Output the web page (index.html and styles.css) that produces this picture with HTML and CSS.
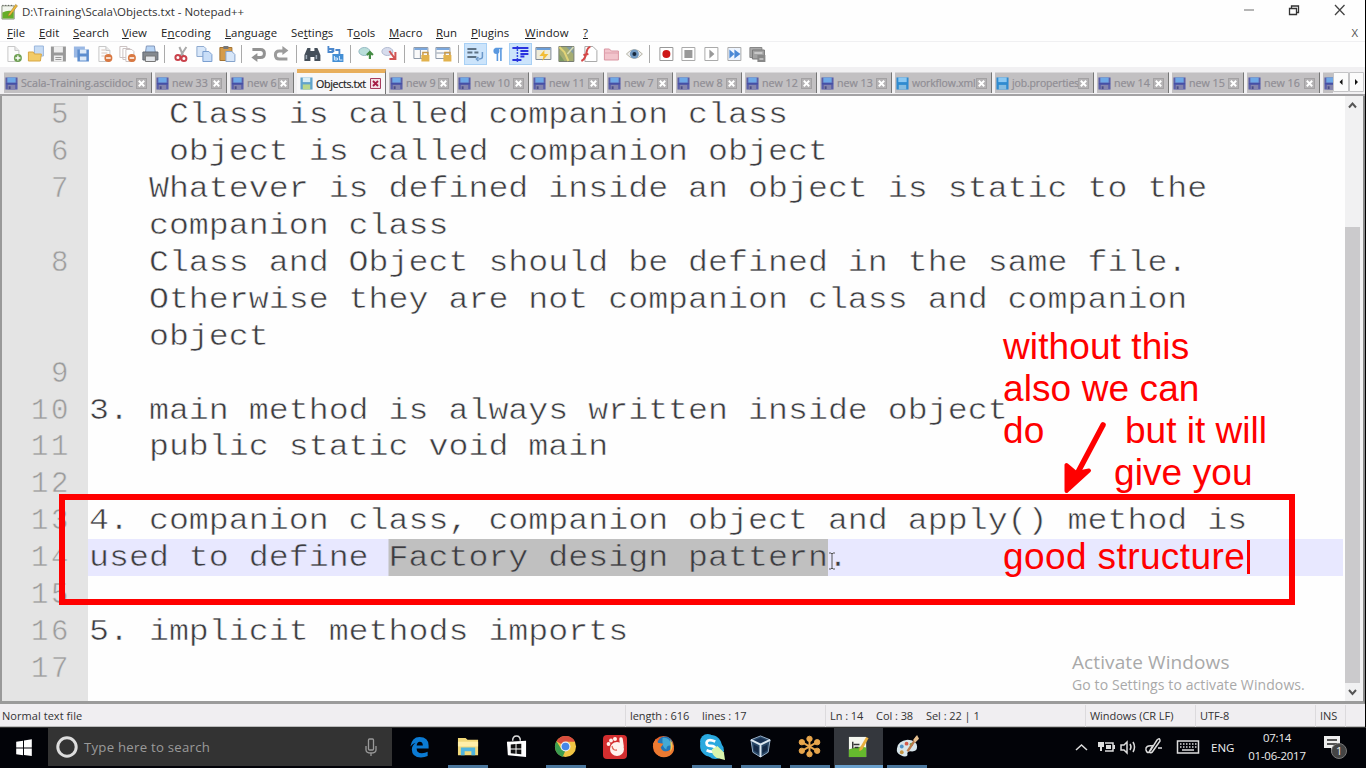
FILE: index.html
```html
<!DOCTYPE html>
<html lang="en">
<head>
<meta charset="utf-8">
<title>D:\Training\Scala\Objects.txt - Notepad++</title>
<link rel="stylesheet" href="styles.css">
</head>
<body>
<svg class="defs" width="0" height="0">
  <symbol id="disk" viewBox="0 0 14 14"><rect x=".5" y=".5" width="13" height="13" fill="#5a5ea8"/><rect x="2.5" y=".5" width="9" height="5.5" fill="#6fa8e6"/><rect x="1" y="6.5" width="12" height="1.5" fill="#4450a8"/><rect x="3" y="8.5" width="8" height="5" fill="#8585ad"/><rect x="4" y="10" width="2" height="3" fill="#4c4d86"/></symbol>
  <symbol id="diskblue" viewBox="0 0 14 14"><rect x=".5" y=".5" width="13" height="13" fill="#2f8bd0"/><rect x="2.5" y=".5" width="9" height="5" fill="#8cc8f2"/><rect x="3" y="8.5" width="8" height="5" fill="#86bce0"/></symbol>
  <symbol id="close" viewBox="0 0 11 11"><rect x=".5" y=".5" width="10" height="10" fill="#b4b2b4" stroke="#a3a1a3"/><path d="M2.8 2.8l5.4 5.4M8.2 2.8L2.8 8.2" stroke="#fff" stroke-width="2"/></symbol>
  <symbol id="page" viewBox="0 0 18 18"><path d="M3.500 1.500h7l4 4v11h-11z" fill="#fcfcfc" stroke="#c8c8c8"/><path d="M10.500 1.500v4h4" fill="#e8e8e8" stroke="#c8c8c8"/></symbol>
  <symbol id="npp" viewBox="0 0 18 18"><path d="M1 3h13v14H1z" fill="#f2f5ee" stroke="#889180"/><path d="M1.500 10q6-3 12-1v7.500h-12z" fill="#65ad28"/><path d="M2 3v-1M5 3v-1M8 3v-1M11 3v-1" stroke="#444"/><path d="M8 12L15.500 1.500l2 1.500L10 13l-2.500 1z" fill="#eeb938" stroke="#8b6e30" stroke-width=".5"/></symbol>
</svg>
<div class="window">
  <header class="titlebar">
    <svg class="app-icon" viewBox="0 0 18 18"><use href="#npp"/></svg>
    <span class="title">D:\Training\Scala\Objects.txt - Notepad++</span>
    <svg class="win-controls" viewBox="0 0 120 20"><path d="M4 10h10" stroke="#b5b5b5" stroke-width="2"/><path d="M49.500 8.500h7v6h-7zM51.500 8V6h7v6.500h-2" fill="none" stroke="#333" stroke-width="1.300"/><path d="M95 5l9.500 10M104.500 5L95 15" stroke="#444" stroke-width="1.300"/></svg>
  </header>
  <nav class="menu">
    <span><u>F</u>ile</span><span><u>E</u>dit</span><span><u>S</u>earch</span><span><u>V</u>iew</span><span>E<u>n</u>coding</span><span><u>L</u>anguage</span><span>Se<u>t</u>tings</span><span>T<u>o</u>ols</span><span><u>M</u>acro</span><span><u>R</u>un</span><span><u>P</u>lugins</span><span><u>W</u>indow</span><span><u>?</u></span><span class="doc-close">X</span>
  </nav>
  <div class="toolbar">
    <svg viewBox="0 0 18 18"><use href="#page"/><circle cx="13.500" cy="13" r="4" fill="#6ea052"/><path d="M13.500 10.500v5M11 13h5" stroke="#fff" stroke-width="1.300"/></svg>
    <svg viewBox="0 0 18 18"><path d="M7 1h9v10H7z" fill="#c7dcf4" stroke="#9ab6dc"/><path d="M1 7h5l1 2h7l-1 7H1z" fill="#f2cb68" stroke="#d8a744"/></svg>
    <svg viewBox="0 0 18 18"><path d="M1.500 1.500h15v15h-15z" fill="#999"/><path d="M4.500 1.500h9v6h-9zM4.500 10.500h9v6h-9z" fill="#eee"/><path d="M6 12.500h6M6 14.500h6" stroke="#999"/></svg>
    <svg viewBox="0 0 18 18"><path d="M1.500 1.500h11v11h-11z" fill="#9ab8e4"/><path d="M5 4.500h11.500v12H5z" fill="#5c8dce"/><path d="M7.500 4.500h6.500v4H7.500zM7.500 11.500h6.500v4H7.500z" fill="#dce9f8"/></svg>
    <svg viewBox="0 0 18 18"><use href="#page"/><path d="M6 5h4M6 8h6M6 11h4" stroke="#d5c2b8"/><circle cx="13" cy="13" r="4" fill="#d97841"/><path d="M10.700 13h4.600" stroke="#fff" stroke-width="1.500"/></svg>
    <svg viewBox="0 0 18 18"><path d="M1.500 1.500h7v11h-7zM4.500 3.500h7v11h-7z" fill="#fff" stroke="#ccc3c3"/><path d="M7.500 4.500h6l2 2v10h-8z" fill="#fff" stroke="#ccc3c3"/><circle cx="13.500" cy="13" r="4" fill="#d97841"/><path d="M11.200 13h4.600" stroke="#fff" stroke-width="1.500"/></svg>
    <svg viewBox="0 0 18 18"><path d="M5 1h8l1 7H4z" fill="#b9d5f5" stroke="#8498bb"/><path d="M1.500 7h15v8h-15z" fill="#84898f" stroke="#626973"/><path d="M4 11h10v5.500H4z" fill="#e2e5e9" stroke="#777"/></svg>
    <i></i>
    <svg viewBox="0 0 18 18"><path d="M7 2l4 9M14 2l-6 9" stroke="#aaa" stroke-width="2"/><circle cx="5.500" cy="12.500" r="2.500" fill="none" stroke="#c9414b" stroke-width="2"/><circle cx="11.500" cy="13.500" r="2.500" fill="none" stroke="#c9414b" stroke-width="2"/></svg>
    <svg viewBox="0 0 18 18"><path d="M1.500 1.500h7l2 2v8h-9z" fill="#d8e7f9" stroke="#90abd0"/><path d="M7.500 6.500h6l3 3v7h-9z" fill="#c9def8" stroke="#7b9fd0"/></svg>
    <svg viewBox="0 0 18 18"><path d="M1.500 2.500h12v13h-12z" fill="#d59c4b" stroke="#a47332"/><path d="M5 1h5v3H5z" fill="#777"/><path d="M7.500 6.500h6l3 3v7h-9z" fill="#d8e7f9" stroke="#86a4cc"/></svg>
    <i></i>
    <svg viewBox="0 0 18 18"><path d="M3 4.500h8q4 0 4 4t-4 4H6" fill="none" stroke="#929292" stroke-width="3"/><path d="M8 8v9l-6-4.500z" fill="#929292"/></svg>
    <svg viewBox="0 0 18 18"><path d="M12 6H7q-4 0-4 4t4 4h8" fill="none" stroke="#9b9b9b" stroke-width="3"/><path d="M10 1v9l6-4.500z" fill="#9b9b9b"/></svg>
    <i></i>
    <svg viewBox="0 0 18 18"><path d="M4 3h3v3h4V3h3l3 7v6h-6v-4H7v4H1v-6z" fill="#444e59"/><path d="M3 10v4M13 10v4" stroke="#9da8b5" stroke-width="1.500"/></svg>
    <svg viewBox="0 0 18 18"><path d="M2 1v6h4V4H2M7 3v4M9 5h4v4" fill="none" stroke="#4c88cd" stroke-width="1.800"/><path d="M6 9h11v8H6z" fill="#438fd5"/><path d="M8 11v4h3v-2H8M13 11v4h3" fill="none" stroke="#d9ecff"/></svg>
    <i></i>
    <svg viewBox="0 0 18 18"><ellipse cx="7" cy="6.500" rx="5.500" ry="4" fill="#b9deda" stroke="#96bac4"/><path d="M12.500 14V8M9.500 10L12.500 7l3 3" stroke="#438b43" stroke-width="2.200" fill="none"/></svg>
    <svg viewBox="0 0 18 18"><ellipse cx="7" cy="6.500" rx="5.500" ry="4" fill="#d7dced" stroke="#b1bad0"/><path d="M9 6l5 7M15 7v7H9" stroke="#d15454" stroke-width="2" fill="none"/></svg>
    <i></i>
    <svg viewBox="0 0 18 18"><path d="M1.500 2.500h14v11h-14z" fill="#fafafa" stroke="#8f9baa"/><path d="M2 4h13" stroke="#7ca8dd" stroke-width="2"/><path d="M8 5v8" stroke="#8f9baa"/><path d="M9 10h8v6.500H9z" fill="#e2b24c"/><path d="M10.500 10V7.500h5V10" fill="none" stroke="#c99a49" stroke-width="1.500"/></svg>
    <svg viewBox="0 0 18 18"><path d="M1.500 2.500h14v11h-14z" fill="#fafafa" stroke="#8f9baa"/><path d="M2 4h13" stroke="#7ca8dd" stroke-width="2"/><path d="M2 8h13" stroke="#8f9baa"/><path d="M9 10h8v6.500H9z" fill="#e2b24c"/><path d="M10.500 10V7.500h5V10" fill="none" stroke="#c99a49" stroke-width="1.500"/></svg>
    <i></i>
    <svg class="on" viewBox="0 0 18 18"><path d="M1 4h9M1 7.500h5M8 7.500h4M1 12h9" stroke="#5d7184" stroke-width="2"/><path d="M16 7v5q0 2-4 2M12 12l-2 2 2 2" fill="none" stroke="#6b97c9" stroke-width="1.500"/></svg>
    <svg viewBox="0 0 18 18"><path d="M8 4v12M11.500 4v12M6 3.500h7" stroke="#5a98df" stroke-width="1.600"/><circle cx="7" cy="6" r="3" fill="#5a98df"/></svg>
    <svg class="on" viewBox="0 0 18 18"><path d="M6 1v16" stroke="#334ae0" stroke-width="1.500" stroke-dasharray="2 1"/><path d="M1 3h16M9 6h8M9 9h8M9 11.500h4M1 15h9" stroke="#2933df" stroke-width="2"/></svg>
    <svg viewBox="0 0 18 18"><path d="M1.500 2.500h15v12h-15z" fill="#efecd9" stroke="#818b99"/><path d="M2 4h14" stroke="#6b9ed9" stroke-width="2"/><path d="M10 5L5 11h4l-1 5 6-7h-4z" fill="#f1bd37"/></svg>
    <svg viewBox="0 0 18 18"><path d="M1.500 1.500h15v15h-15z" fill="#a5ad72" stroke="#787e72"/><path d="M2 2l5 5 4 9" fill="none" stroke="#e2d477" stroke-width="2"/><path d="M9 2h7v7z" fill="#839ca2"/><path d="M10 9l6-7" stroke="#d8dcb4" stroke-width="1.500"/><path d="M2 9l5 7H2z" fill="#7d9a64"/></svg>
    <svg viewBox="0 0 18 18"><path d="M4.500 1.500h8l4 4v11h-12z" fill="#fff" stroke="#aaa"/><path d="M1 16q4-2 5-8 1-6 4-6M3 10l5-1" stroke="#d44848" stroke-width="2" fill="none"/></svg>
    <svg viewBox="0 0 18 18"><path d="M2 4h5l2 2h7v9H2z" fill="#f2c4cc" stroke="#d995a2"/><path d="M2 8h14" stroke="#dfa0ad"/></svg>
    <svg viewBox="0 0 18 18"><path d="M1 9q8-9 16 0-8 9-16 0z" fill="#eee" stroke="#b8b6a8"/><circle cx="9" cy="9" r="4.500" fill="#7199c1"/><circle cx="9" cy="9" r="2" fill="#17283d"/></svg>
    <i></i>
    <svg viewBox="0 0 18 18"><path d="M2.500 2.500h13v13h-13z" fill="#fff" stroke="#999"/><circle cx="9" cy="9" r="4" fill="#cd1717"/></svg>
    <svg viewBox="0 0 18 18"><path d="M2.500 2.500h13v13h-13z" fill="#fff" stroke="#aaa"/><path d="M5 5h8v8H5z" fill="#999"/></svg>
    <svg viewBox="0 0 18 18"><path d="M2.500 2.500h13v13h-13z" fill="#fff" stroke="#aaa"/><path d="M7 4.500v9l5-4.500z" fill="#999"/></svg>
    <svg viewBox="0 0 18 18"><path d="M2.500 2.500h13v13h-13z" fill="#eef5ff" stroke="#aaa"/><path d="M4 4.500v9L9 9zM9 4.500v9l6-4.500z" fill="#4a88d5"/></svg>
    <svg viewBox="0 0 18 18"><path d="M1.500 2.500h12v10h-12z" fill="#aaa" stroke="#888"/><path d="M4 5h12v9H4z" fill="#a2a2a2" stroke="#777"/><path d="M9 10h8v7H9z" fill="#888"/><path d="M11 14h4M6 8h8" stroke="#eee"/></svg>
  </div>
  <div class="tabs">
    <div class="tab"><svg><use href="#disk"/></svg><b>Scala-Training.asciidoc</b><svg><use href="#close"/></svg></div>
    <div class="tab"><svg><use href="#disk"/></svg><b>new 33</b><svg><use href="#close"/></svg></div>
    <div class="tab"><svg><use href="#disk"/></svg><b>new 6</b><svg><use href="#close"/></svg></div>
    <div class="tab active"><svg viewBox="0 0 14 14"><path d="M.5.500h13v13H.5z" fill="#61a3cb"/><path d="M3 .5h8v5H3z" fill="#d8edf5"/><path d="M3 8h8v5.500H3z" fill="#b9d68c"/></svg><b>Objects.txt</b><svg viewBox="0 0 11 11"><path d="M.5.500h10v10H.5z" fill="#f3dfe5" stroke="#a73c5e"/><path d="M3 3l5 5M8 3L3 8" stroke="#a51c45" stroke-width="1.800"/></svg></div>
    <div class="tab"><svg><use href="#disk"/></svg><b>new 9</b><svg><use href="#close"/></svg></div>
    <div class="tab"><svg><use href="#disk"/></svg><b>new 10</b><svg><use href="#close"/></svg></div>
    <div class="tab"><svg><use href="#disk"/></svg><b>new 11</b><svg><use href="#close"/></svg></div>
    <div class="tab"><svg><use href="#disk"/></svg><b>new 7</b><svg><use href="#close"/></svg></div>
    <div class="tab"><svg><use href="#disk"/></svg><b>new 8</b><svg><use href="#close"/></svg></div>
    <div class="tab"><svg><use href="#disk"/></svg><b>new 12</b><svg><use href="#close"/></svg></div>
    <div class="tab"><svg><use href="#disk"/></svg><b>new 13</b><svg><use href="#close"/></svg></div>
    <div class="tab tight"><svg><use href="#diskblue"/></svg><b>workflow.xml</b><svg><use href="#close"/></svg></div>
    <div class="tab tight"><svg><use href="#diskblue"/></svg><b>job.properties</b><svg><use href="#close"/></svg></div>
    <div class="tab"><svg><use href="#disk"/></svg><b>new 14</b><svg><use href="#close"/></svg></div>
    <div class="tab"><svg><use href="#disk"/></svg><b>new 15</b><svg><use href="#close"/></svg></div>
    <div class="tab"><svg><use href="#disk"/></svg><b>new 16</b><svg><use href="#close"/></svg></div>
    <div class="tab cut"><svg><use href="#disk"/></svg></div>
    <svg class="tab-scroll" viewBox="0 0 31 20"><path d="M.5.500h15v19H.5zM16.500.500h14v19h-14z" fill="#fbfbfb" stroke="#c4c4c6"/><path d="M9.500 7v6L6.500 10zM22 7v6l3-3z" fill="#111"/></svg>
  </div>
  <main class="editor">
    <div class="code">
      <div class="row"><span class="num">5</span><pre>    Class is called companion class</pre></div>
      <div class="row"><span class="num">6</span><pre>    object is called companion object</pre></div>
      <div class="row"><span class="num">7</span><pre>   Whatever is defined inside an object is static to the</pre></div>
      <div class="row"><span class="num"></span><pre>   companion class</pre></div>
      <div class="row"><span class="num">8</span><pre>   Class and Object should be defined in the same file.</pre></div>
      <div class="row"><span class="num"></span><pre>   Otherwise they are not companion class and companion</pre></div>
      <div class="row"><span class="num"></span><pre>   object</pre></div>
      <div class="row"><span class="num">9</span><pre></pre></div>
      <div class="row"><span class="num">10</span><pre>3. main method is always written inside object</pre></div>
      <div class="row"><span class="num">11</span><pre>   public static void main</pre></div>
      <div class="row"><span class="num">12</span><pre></pre></div>
      <div class="row"><span class="num">13</span><pre>4. companion class, companion object and apply() method is</pre></div>
      <div class="row current"><span class="num">14</span><pre>used to define <mark>Factory design pattern</mark>.</pre></div>
      <div class="row"><span class="num">15</span><pre></pre></div>
      <div class="row"><span class="num">16</span><pre>5. implicit methods imports</pre></div>
      <div class="row"><span class="num">17</span><pre></pre></div>
      <div class="row tail"><span class="num"></span><pre></pre></div>
    </div>
    <div class="scrollbar">
      <svg viewBox="0 0 15 18"><path d="M4 11.500l3.500-4 3.500 4" fill="none" stroke="#555" stroke-width="2"/></svg>
      <div class="thumb"></div>
      <svg viewBox="0 0 15 18"><path d="M4 7l3.500 4L11 7" fill="none" stroke="#555" stroke-width="2"/></svg>
    </div>
  </main>
  <footer class="status"><span>Normal text file</span><span>length : 616</span><span>lines : 17</span><span>Ln : 14</span><span>Col : 38</span><span>Sel : 22 | 1</span><span>Windows (CR LF)</span><span>UTF-8</span><span>INS</span><span></span></footer>
</div>
<div class="taskbar">
  <svg class="start" viewBox="0 0 48 41"><path d="M16 14l7-1v7h-7zM24 12.800l8-1.200V20h-8zM16 21h7v7l-7-1zM24 21h8v7.800l-8-1z" fill="#fff"/></svg>
  <div class="search"><svg viewBox="0 0 24 24"><circle cx="12" cy="12" r="9.200" fill="none" stroke="#ddd" stroke-width="3"/></svg><span>Type here to search</span><svg class="mic" viewBox="0 0 14 20"><rect x="4.500" y="2" width="5" height="11" rx="1" fill="none" stroke="#999" stroke-width="1.300"/><path d="M2 9v4q0 3 5 3t5-3V9M7 16v3" fill="none" stroke="#999" stroke-width="1.300"/></svg></div>
  <div class="apps">
    <div class="app"><svg viewBox="0 0 24 24"><path d="M2.500 12Q4 2 12 2q9.500 0 9.500 9v3H9q0 5 5.500 5 3.500 0 6-1.500V22q-3 1.500-7 1.500Q4 23 4 15q0-4 4-7-3 .5-5.500 4zM9 11h6.500q0-4-3.200-4Q9.500 7 9 11z" fill="#0b7bd4"/></svg></div>
    <div class="app open"><svg viewBox="0 0 24 24"><path d="M1 3h8l2 2h11v16H1z" fill="#f1d879"/><path d="M1 7h21v5H1z" fill="#ffefa9"/><path d="M4 21v-8h15v8h-4v-4H8v4z" fill="#4fb5df"/></svg></div>
    <div class="app"><svg viewBox="0 0 24 24"><path d="M2 7l20-1v17L3 21z" fill="#fff"/><path d="M8 6q0-5 4-5t4 5" fill="none" stroke="#ddd" stroke-width="1.500"/><path d="M6 10l5-.5V14H6zM12 9.400l5-.4v5h-5zM6 15h5v4.500L6 19zM12 15h5v5l-5-.4z" fill="#111"/></svg></div>
    <div class="app open"><svg viewBox="0 0 24 24"><circle cx="12" cy="12" r="11" fill="#f1c544"/><path d="M12 12L2.500 6.500Q6 1 12 1q7 0 10 6H12z" fill="#d84d3e"/><path d="M2.500 6.500L8 15l4 1-3 7Q1 20 1 12q0-3 1.500-5.500z" fill="#3c9c50"/><circle cx="12" cy="12" r="5.200" fill="#e9eef3"/><circle cx="12" cy="12" r="4" fill="#4386e8"/></svg></div>
    <div class="app"><svg class="big" viewBox="0 0 26 26"><rect x="1" y="1" width="24" height="24" rx="4" fill="#d32e2f"/><circle cx="15" cy="15" r="7" fill="#fff3ee"/><circle cx="6.500" cy="10" r="1.900" fill="#fff3ee"/><circle cx="9" cy="6.500" r="1.900" fill="#fff3ee"/><circle cx="13" cy="5" r="2" fill="#fff3ee"/><path d="M19 5l1 7" stroke="#fff3ee" stroke-width="3.500" stroke-linecap="round"/><path d="M10 12q1 5 5 4" fill="none" stroke="#e06a5a" stroke-width="1.300"/></svg></div>
    <div class="app"><svg viewBox="0 0 24 24"><circle cx="12" cy="12" r="11" fill="#e6622b"/><circle cx="13.500" cy="9.500" r="8" fill="#2176b8"/><path d="M11 3q8-1 9 8-5-1-5 4-5-2-4-12z" fill="#43a9d5"/><path d="M1 9l3-5 2 4 6 1-3 4q2 5 7 4 6-1 5-9 5 9-3 14-9 4-15-4-2-4-2-9z" fill="#ec7a31"/><path d="M19 5q5 6 0 13 1-6 0-13z" fill="#f7c64f"/></svg></div>
    <div class="app open"><svg class="big" viewBox="0 0 24 24"><circle cx="8" cy="7" r="7" fill="#2aa9df"/><circle cx="15" cy="15" r="8" fill="#2aa9df"/><circle cx="11" cy="11" r="10" fill="#2aa9df"/><path d="M15 7q-7-3-8 1 0 3 4 3t4 3q-1 4-8 1" fill="none" stroke="#fff" stroke-width="2.500"/><path d="M12 14l5-3 6 6 1 7-8-2q-5-4-4-8z" fill="#d9f5ad"/></svg></div>
    <div class="app open"><svg viewBox="0 0 24 24"><path d="M12 1l10 4-2 13-8 5-8-5L2 5z" fill="#294867" stroke="#9cb3cd"/><path d="M2 5l10 5 10-5M12 10v13" fill="none" stroke="#dce7f0" stroke-width="2"/><path d="M12 3l6 2.500L12 8 6 5.500z" fill="#172f50"/><path d="M5 10l5 2.500V19l-5-3zM19 10l-5 2.500V19l5-3z" fill="#142946"/></svg></div>
    <div class="app open"><svg viewBox="0 0 24 24" fill="#e8a64c" stroke="#e8a64c"><path d="M12 5v14M5 8l14 8M19 8L5 16" stroke-width="2"/><circle cx="12" cy="4" r="2.800"/><circle cx="12" cy="20" r="2.800"/><circle cx="4" cy="7.500" r="2.800"/><circle cx="20" cy="7.500" r="2.800"/><circle cx="4" cy="16.500" r="2.800"/><circle cx="20" cy="16.500" r="2.800"/></svg></div>
    <div class="app open focused"><svg viewBox="0 0 24 24"><path d="M2 2h18v21H2z" fill="#f4f6ef"/><path d="M2 15q9-4 18-2v10H2z" fill="#66b92e"/><path d="M6 7v7M7 10h6M8 13h4" stroke="#333" stroke-width="1.500"/><path d="M13 14L20 2l2.500 1.500L16 15l-3 2z" fill="#e9af3d"/></svg></div>
    <div class="app open"><svg viewBox="0 0 24 24"><path d="M1 14Q2 6 12 5q9 0 10 7 0 6-7 5-4 0-3 4-2 3-7 0-5-2-4-7z" fill="#d7e5eb"/><circle cx="6" cy="12" r="2" fill="#4d91c9"/><circle cx="11" cy="9" r="2" fill="#d45c4c"/><circle cx="16" cy="10" r="1.800" fill="#74a54b"/><circle cx="6" cy="18" r="2" fill="#c49443"/><path d="M12 17L22 2" stroke="#b97a4b" stroke-width="2.500"/><path d="M18 5l4-5 2 4-4 4z" fill="#e5bf90"/></svg></div>
  </div>
  <div class="tray">
    <svg class="tray-icons" viewBox="0 0 136 41"><g fill="none" stroke="#ddd" stroke-width="1.500"><path d="M6 23l5.500-5 5.500 5"/><path d="M35 16h8v8h-8"/><path d="M51 18h3l3-3v11l-3-3h-3zM60 17q2 3 0 6M63 15q3 5 0 10"/><path d="M83 19q-8-1-7 4 2 6 6-2l5-8q3-3 3 1l-7 10q-2 3-4 1l4-7M88 21h4"/><rect x="107.500" y="14" width="21" height="12"/><path d="M110 17h17M110 20h17" stroke-dasharray="1.500 1.500"/><path d="M112 23h12"/></g><path d="M28 15h6v5h-2v4h-2v-4h-2zM36 18h5v4h-5zM43 18h2v4h-2z" fill="#ddd"/></svg>
    <span class="lang">ENG</span>
    <div class="clock"><span>07:14</span><span>01-06-2017</span></div>
    <div class="notify"><svg viewBox="0 0 26 26"><path d="M1 2h16v12h-5l-4 5v-5H1z" fill="#eee"/><path d="M4 6h10M4 10h10" stroke="#222" stroke-width="1.500"/><circle cx="16" cy="17" r="7.500" fill="#444" stroke="#777"/></svg><span>1</span></div>
  </div>
</div>
<div class="watermark"><p>Activate Windows</p><p>Go to Settings to activate Windows.</p></div>
<div class="highlight-box"></div>
<div class="note note-a">without this<br>also we can<br>do</div>
<div class="note note-b">but it will</div>
<div class="note note-c">give you</div>
<div class="note note-d">good structure<span class="caret"></span></div>
<svg class="arrow" viewBox="0 0 50 75"><path d="M43 5L17 54" stroke="#f00" stroke-width="5.500" stroke-linecap="round"/><path d="M6.500 45L6.500 71L29 50.500L16 53z" fill="#f00" stroke="#f00" stroke-width="4" stroke-linejoin="round"/></svg>
<svg class="ibeam" viewBox="0 0 8 18"><path d="M1 1h2l1 1 1-1h2M4 2v14M1 17h2l1-1 1 1h2" fill="none" stroke="#555"/></svg>
</body>
</html>
```

FILE: styles.css
```css
* { box-sizing: border-box; }
body { margin: 0; width: 1366px; height: 768px; overflow: hidden; position: relative; background: #000; font-family: "Open Sans", "Noto Sans", sans-serif; }
.defs { position: absolute; }
.window { display: flex; flex-direction: column; width: 1365px; height: 727px; background: #fefefe; }

.titlebar { display: flex; align-items: center; height: 23px; padding-left: 1px; }
.app-icon { width: 17px; height: 17px; }
.title { margin-left: 4px; font-size: 11.5px; color: #333; white-space: pre; }
.win-controls { width: 120px; height: 20px; margin: 0 5px 3px auto; }

.menu { display: flex; height: 18px; padding-left: 7px; line-height: 19px; font-size: 11.4px; color: #222; }
.menu span:nth-child(1) { width: 32px; }
.menu span:nth-child(2) { width: 34px; }
.menu span:nth-child(3) { width: 49px; }
.menu span:nth-child(4) { width: 39px; }
.menu span:nth-child(5) { width: 64px; letter-spacing: .15px; }
.menu span:nth-child(6) { width: 66px; letter-spacing: .1px; }
.menu span:nth-child(7) { width: 56px; }
.menu span:nth-child(8) { width: 42px; }
.menu span:nth-child(9) { width: 47px; }
.menu span:nth-child(10) { width: 35px; }
.menu span:nth-child(11) { width: 54px; }
.menu span:nth-child(12) { width: 58px; letter-spacing: .1px; }
.menu .doc-close { margin-left: auto; margin-right: 7px; color: #555; }

.toolbar { display: flex; align-items: center; height: 26px; padding: 0 0 1px 1.8px; border-top: 1px solid #f0f0f2; }
.toolbar svg { flex: none; width: 22.8px; height: 22px; padding: 2px; }
.toolbar i { width: 8.6px; height: 18px; background: linear-gradient(#aaa, #aaa) 3px 0 / 1px 100% no-repeat; }
.toolbar .on { background: #cce4fb; border: 1px solid #a8d0f5; padding: 1px; }

.tabs { display: grid; grid-template-columns: 151px 75px 67px 92px 68px 75px 75px 69px 69px 75px 75px 100px 102px 75px 75px 76px 10px 31px; height: 30px; padding: 3px 0 4px 4px; background: #f1f0f2; border-bottom: 3px solid #a3a2a4; }
.tab { display: flex; align-items: center; height: 21px; margin-top: 2px; margin-right: 3px; padding-left: 1px; background: #c2c0c2; border-right: 1px solid #777; border-top: 1px solid #d9d8da; font-size: 10.7px; color: #8f8d94; overflow: hidden; white-space: nowrap; }
.tab b { flex: 1; min-width: 0; margin-left: 3px; font-weight: 400; -webkit-text-stroke: .2px; }
.tab svg { flex: none; width: 13px; height: 13px; }
.tab svg:last-child { width: 11px; height: 11px; margin-right: 4px; }
.tab.tight b { font-size: 10.4px; letter-spacing: -.1px; }
.tab.active { height: 25px; margin-top: -1px; padding-left: 3px; background: #f8f7f8; border-top: 4px solid #e8ae5b; color: #222; }
.tab.active b { letter-spacing: -.35px; }
.tab.cut { margin-right: 0; border-right: 0; }
.tab.cut svg { width: 13px; height: 13px; margin: 0; }
.tab-scroll { width: 31px; height: 20px; margin-top: 2px; }

.editor { display: flex; height: 608px; margin-top: -1px; border-left: 2px solid #999; border-bottom: 3px solid #9b9b9b; border-right: 2px solid #888; background: #fefefe; overflow: hidden; }
.code { width: 1341px; margin-right: 2px; }
.row { display: grid; grid-template-columns: 86px 1fr; height: 36.94px; }
.num { padding: 2px 17px 0 0; background: #e4e4e4; color: #9c9c9c; text-align: right; font: 29px/35px "Liberation Mono", monospace; letter-spacing: 2.57px; -webkit-text-stroke: .5px #e4e4e4; }
.row pre { margin: 0 0 0 1.2px; width: 1090px; padding-top: 2px; color: #3c3c40; font: 29px/35px "Liberation Mono", monospace; -webkit-text-stroke: .5px #fefefe; transform: scaleX(1.1475); transform-origin: 0 0; white-space: pre; }
.current { background: linear-gradient(90deg, #e4e4e4 86px, #e8e8ff 86px); }
.current pre { -webkit-text-stroke-color: #e8e8ff; }
.row mark { display: inline-block; height: 37px; margin-top: -2px; padding-top: 2px; background: #c0c0c0; color: inherit; -webkit-text-stroke-color: #c0c0c0; }
.tail { height: 20px; }
.scrollbar { display: flex; flex-direction: column; width: 18px; background: #f1f1f2; }
.scrollbar svg { width: 15px; height: 18px; }
.thumb { width: 15px; height: 456px; margin-top: auto; background: #cbcacc; }

.status { display: grid; grid-template-columns: 625px 73px 127px 47px 50px 163px 110px 120px 30px 1fr; height: 23px; padding-top: 1px; background: #f0eef1; border-bottom: 1px solid #bbb; line-height: 22px; font-size: 11px; letter-spacing: -.05px; color: #333; white-space: nowrap; }
.status span { padding-left: 4px; border-left: 1px solid #dcdadd; }
.status span:nth-child(1) { padding-left: 2px; border: 0; letter-spacing: .05px; }
.status span:nth-child(3), .status span:nth-child(5), .status span:nth-child(6) { border: 0; }

.taskbar { display: flex; height: 41px; background: #020308; border-top: 1px solid #333; }
.start { width: 48px; height: 40px; }
.search { display: flex; align-items: center; width: 344px; height: 38px; padding: 0 14px 0 7px; background: #333; color: #9a9a9a; font-size: 13.2px; }
.search > svg { width: 24px; height: 24px; }
.search > span { margin-left: 5px; letter-spacing: .25px; }
.search .mic { width: 14px; height: 20px; margin-left: auto; }
.apps { display: grid; grid-template-columns: repeat(11, 48.8px); padding-left: 3px; }
.app { display: flex; align-items: center; justify-content: center; height: 40px; padding-bottom: 3px; }
.app svg { width: 23px; height: 23px; }
.app svg.big { width: 26px; height: 26px; }
.app.open { background: linear-gradient(#4b779d, #4b779d) 50% 100% / 40px 3px no-repeat; }
.app.focused { background: linear-gradient(#6aa0cc, #6aa0cc) 50% 100% / 48px 3px no-repeat, #34373d; }
.tray { display: flex; align-items: center; height: 38px; margin-left: auto; color: #eee; font-size: 11.5px; }
.tray-icons { width: 136px; height: 41px; }
.lang { width: 36px; margin-left: 5px; }
.clock { display: flex; flex-direction: column; width: 60px; text-align: center; line-height: 18px; font-size: 11.4px; letter-spacing: -.2px; }
.notify { position: relative; width: 26px; height: 26px; margin: 0 17px 0 16px; }
.notify span { position: absolute; left: 13px; top: 9px; font-size: 11px; line-height: 15px; }

.watermark { position: absolute; left: 1072px; top: 650px; color: #a9a9a9; }
.watermark p { margin: 0; font-size: 14px; line-height: 21px; letter-spacing: .1px; white-space: nowrap; }
.watermark p:first-child { font-size: 19px; line-height: 24px; }
.highlight-box { position: absolute; left: 59px; top: 494px; width: 1236px; height: 111px; border: 6px solid #f00; }
.note { position: absolute; color: #f00; font: 37px/42px "Liberation Sans", Arial, sans-serif; letter-spacing: .1px; white-space: nowrap; }
.note-a { left: 1003px; top: 326px; }
.note-b { left: 1125px; top: 410px; letter-spacing: 0; }
.note-c { left: 1114px; top: 452px; }
.note-d { left: 1003px; top: 536px; display: flex; align-items: center; letter-spacing: .4px; }
.caret { width: 3px; height: 34px; margin-left: 2px; background: #f00; }
.arrow { position: absolute; left: 1060px; top: 420px; width: 50px; height: 75px; }
.ibeam { position: absolute; left: 828px; top: 552px; width: 8px; height: 18px; }
```
